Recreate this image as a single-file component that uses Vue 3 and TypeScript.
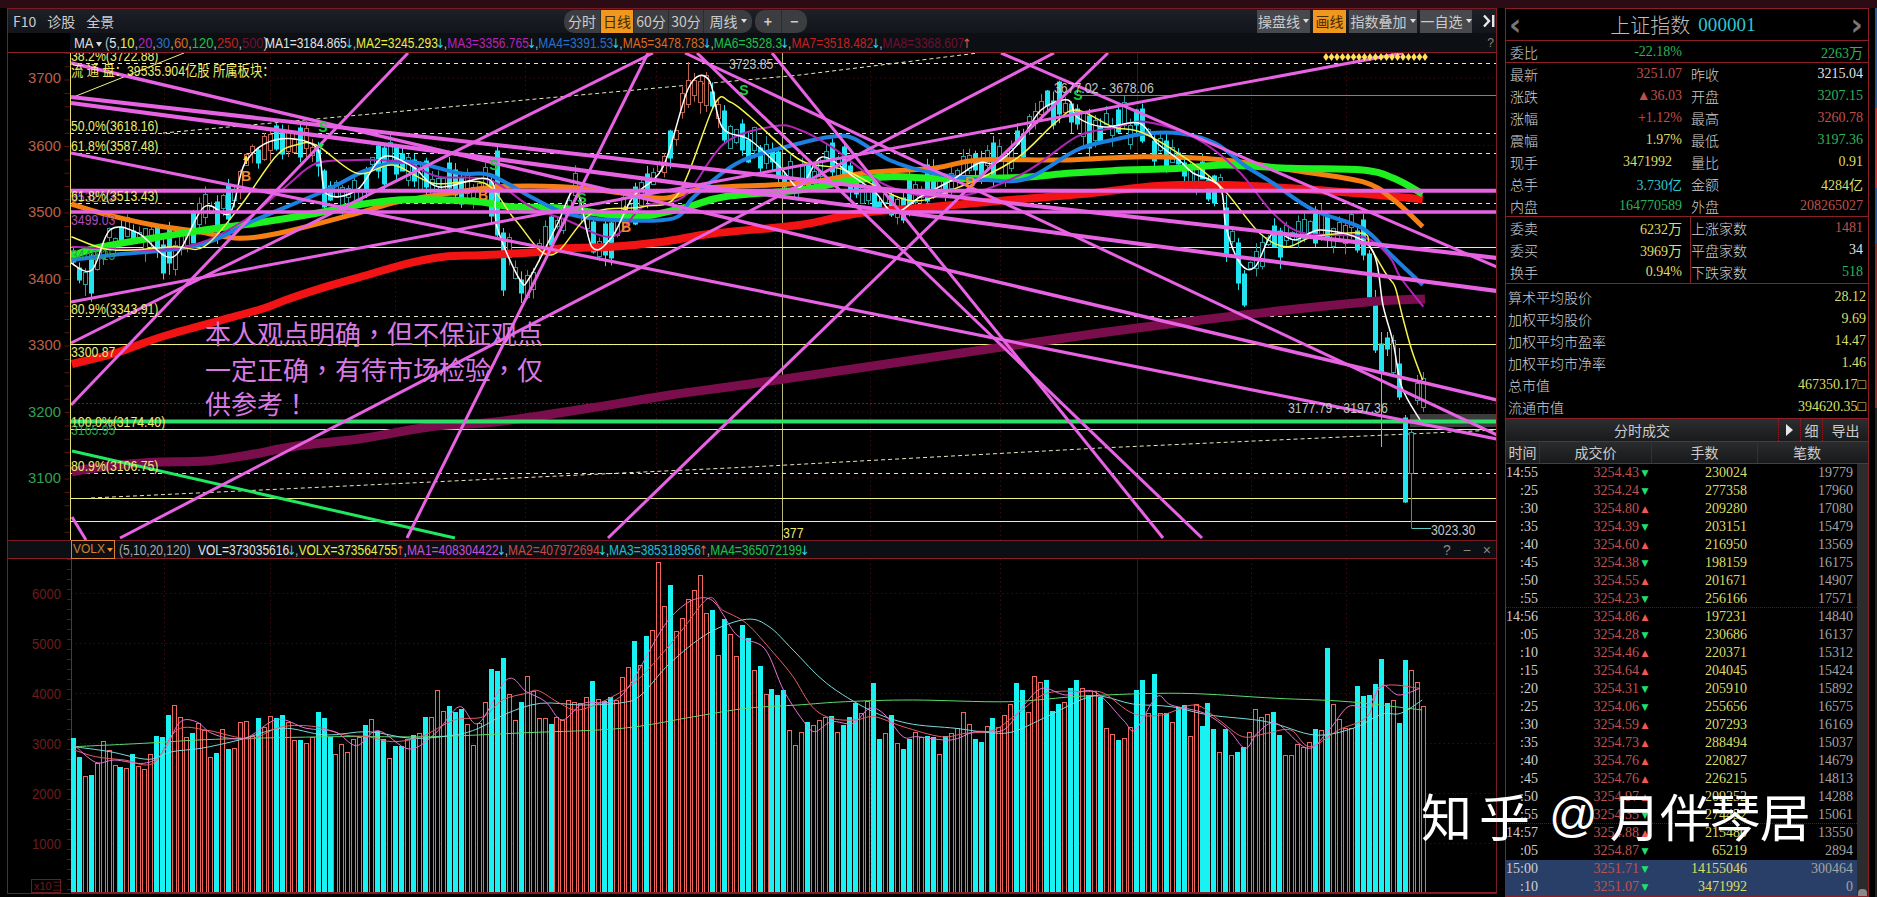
<script setup lang="ts">
type P = [number, number]
const conv = (a: number[], ox: number, sx: number, oy: number): P[] => {
  const r: P[] = []
  for (let i = 0; i < a.length; i += 2) r.push([ox + a[i] / sx, oy + a[i + 1] / 3])
  return r
}
const z1 = (a: number[]) => conv(a, 0, 1.96, 0)
const z2 = (a: number[]) => conv(a, 800, 2.24, 0)
const z7 = (a: number[]) => conv(a, 0, 2.09, 290)
const z10 = (a: number[]) => conv(a, 1100, 3, 200)
const z8 = (a: number[]) => conv(a, 0, 2.09, 560)
const z9 = (a: number[]) => conv(a, 750, 2.09, 560)

const smooth = (p: P[]): string => {
  let d = `M${p[0][0].toFixed(1)} ${p[0][1].toFixed(1)}`
  for (let i = 0; i < p.length - 1; i++) {
    const a = p[Math.max(0, i - 1)], b = p[i], c = p[i + 1], e = p[Math.min(p.length - 1, i + 2)]
    d += `C${(b[0] + (c[0] - a[0]) / 6).toFixed(1)} ${(b[1] + (c[1] - a[1]) / 6).toFixed(1)} ${(c[0] - (e[0] - b[0]) / 6).toFixed(1)} ${(c[1] - (e[1] - b[1]) / 6).toFixed(1)} ${c[0].toFixed(1)} ${c[1].toFixed(1)}`
  }
  return d
}

/* volumes: positive = up (hollow), negative = down (solid) */
const vols = [-3080,-2700,2320,-2340,2570,3020,2840,2540,-2500,2480,-2760,2520,2460,2750,-3120,-3100,-3540,3740,3500,3100,-3180,3380,3240,2700,-2780,3260,-2850,2870,3400,3420,3120,-3480,3300,3520,-3480,-3540,3400,3040,-3040,2980,3100,-3600,-3480,-3100,2760,2950,2800,3060,3100,-3340,3450,-3220,-3060,2680,-2920,-2920,3060,-3130,3170,-3500,3500,4040,3610,-3720,-3600,-3660,3350,2930,3370,3790,-4460,-4420,-4670,3950,3430,-3800,4310,4020,3470,3470,-3350,3490,3430,3830,3790,3770,3900,-4210,3850,-3810,-3890,3830,4290,4490,-5010,4530,-5110,5230,6600,5710,-6130,5210,5470,5850,6030,6330,5570,-5630,4730,-5450,5150,4710,-5330,-5070,4430,-4510,3950,-4050,-3930,-4030,3230,2930,3190,-3390,3330,3430,3500,-3510,3190,-3330,-3490,-3780,3570,3820,-4170,-3050,3170,-3540,2970,-2850,-3050,3200,3100,-3110,-3100,2750,-3110,3170,3270,3590,3350,-3050,-2990,3310,-3470,3300,3530,3750,-4170,-4030,3590,4310,4190,-4230,-3610,-3760,3790,-4070,-4230,4070,-3930,4010,-3890,3270,3150,-3030,3070,3290,-4030,-4230,3570,-4350,3570,-3580,3400,-3700,-3740,3110,3750,-3310,-3770,-3250,2790,-3250,2730,-2790,-2900,3190,3650,3490,3550,-3590,-3130,2730,2730,2950,2890,2990,-3250,3230,-4870,3750,3450,3270,3280,-4110,-3910,-3930,-4150,-4650,-3770,3830,-3370,-4630,4430,4190,3710]
const step = (1423 - 73.2) / (vols.length - 1)
const xOf = (i: number) => 73.2 + i * step
const volBars = vols.map((v, i) => {
  const h = Math.round(Math.abs(v) / 20)
  return { x: Math.round(xOf(i) - 2.5), y: 892 - h, h, up: v > 0 }
})

const path: P[] = [[71,263],[92,270],[110,230],[138,233],[173,257],[204,207],[230,213],[245,163],[275,140],[316,147],[326,193],[357,190],[383,157],[413,167],[439,187],[490,180],[497,227],[520,280],[530,277],[556,227],[576,190],[592,247],[612,237],[633,197],[663,167],[689,87],[709,80],[722,127],[750,140],[780,167],[800,187],[822,157],[854,177],[876,193],[894,213],[920,197],[952,180],[979,163],[996,163],[1019,143],[1041,110],[1068,100],[1077,117],[1104,127],[1139,123],[1157,143],[1179,160],[1193,173],[1220,187],[1226,227],[1240,263],[1255,267],[1273,233],[1295,240],[1322,230],[1353,230],[1367,253],[1376,300],[1425,400]]
const interp = (x: number) => {
  for (let i = 0; i < path.length - 1; i++) {
    if (x <= path[i + 1][0]) {
      const t = (x - path[i][0]) / (path[i + 1][0] - path[i][0])
      return path[i][1] + t * (path[i + 1][1] - path[i][1])
    }
  }
  return path[path.length - 1][1]
}
let seed = 77
const rnd = () => { seed = (seed * 16807) % 2147483647; return seed / 2147483647 }
const overrides: Record<number, [number, number, number, number]> = {
  1227: [207, 255, 195, 262], 1238: [242, 283, 238, 290], 1244: [273, 305, 270, 307],
  1369: [253, 297, 250, 300], 1375: [297, 350, 290, 353], 1382: [343, 373, 332, 447],
  1387: [337, 349, 332, 356], 1393: [340, 372, 335, 375], 1398: [363, 397, 348, 400],
  1404: [417, 502, 415, 503], 1411: [432, 473, 430, 528], 1417: [383, 400, 375, 405], 1423: [378, 407, 372, 412],
  497: [150, 235, 146, 240], 501: [232, 290, 228, 296], 689: [80, 104, 62, 108], 708: [75, 105, 72, 112], 722: [110, 140, 105, 144],
}
const oKeys = Object.keys(overrides).map(Number)
const candles = vols.map((v, i) => {
  const x = Math.round(xOf(i)) + 0.5
  const up = v > 0
  const near = oKeys.find(k => Math.abs(k - x) < 3)
  let top: number, bot: number, hi: number, lo: number
  if (near !== undefined) {
    [top, bot, hi, lo] = overrides[near]
  } else {
    const h = up ? 6 + rnd() * 18 : 12 + rnd() * 26
    const c = interp(x) + (rnd() - 0.5) * 22
    top = c - h / 2; bot = c + h / 2
    hi = top - rnd() * 8; lo = bot + rnd() * 12
  }
  const warm = (x > 238 && x < 330) || (x > 655 && x < 725) || (x > 1032 && x < 1072)
  return { x, up, top: Math.round(top) + 0.5, h: Math.round(bot - top), hi, lo, warm }
})

const ma8 = smooth([...z7([150,545,230,528,320,517,430,513,520,495,620,468,760,445,900,410,1040,395,1230,355,1400,315,1568,282]), [900,362],[1100,333],[1243,315],[1367,302],[1425,299]])
const ma7 = smooth([...z7([150,222,240,190,350,135,540,60]), ...z1([560,900,640,860,720,825,800,790,870,770,950,765,1060,755,1100,745,1200,740,1300,725,1400,700,1568,675]), ...z2([130,640,300,620,470,600,650,580,800,558,950,555,1100,565,1250,580,1395,598])])
const ma6 = smooth([...z1([140,770,200,740,400,690,500,670,620,640,700,615,780,600,870,600,940,605,1000,620,1100,625,1200,645,1260,650,1350,620,1420,590,1568,570]), ...z2([100,545,200,530,300,535,420,535,520,530,600,520,700,512,850,505,950,495,1100,505,1260,510,1330,535,1395,582])])
const ma5 = smooth([...z1([140,612,200,640,300,675,390,695,470,715,560,695,700,640,780,605,880,580,980,560,1100,560,1200,575,1300,595,1380,565,1568,550]), ...z2([150,518,300,505,400,480,600,480,770,470,950,480,1100,510,1260,545,1330,600,1395,680])])
const ma4 = smooth([...z1([140,780,220,765,390,735,500,660,640,570,720,510,800,485,900,520,960,525,1040,590,1110,640,1200,660,1320,655,1360,590,1450,485,1568,430]), ...z2([70,410,120,415,200,480,300,520,420,540,510,535,620,450,700,420,780,400,850,400,930,430,1000,500,1060,550,1150,630,1260,685,1320,760,1395,855])])
const ma3 = smooth([...z1([140,740,300,750,390,730,480,660,560,560,620,490,700,480,740,480,800,490,860,530,960,540,1040,620,1110,660,1200,710,1260,620,1340,590,1420,430,1520,378,1568,390]), ...z2([70,440,200,560,350,590,500,520,620,410,700,385,770,365,880,410,980,510,1060,640,1130,700,1260,710,1320,770]), ...z10([900,230,970,320])])
const ma2 = smooth([...z1([140,710,220,750,340,740,400,740,470,620,540,470,580,435,620,435,700,520,770,495,850,550,950,550,1010,660,1080,765,1160,640,1260,620,1330,580,1400,315,1430,305,1470,350,1568,480]), ...z2([100,510,240,600,340,570,480,480,570,370,620,330,700,380,770,400,880,490,950,570,1030,700,1090,740,1150,710,1260,700]), ...z10([810,140,860,225,885,260,905,340,935,450,968,540])])
const ma1 = smooth([...path.slice(0, 55), ...z10([810,140,850,320,880,430,905,560,960,660])])

const hlines = { dashed: [63, 133, 153, 203, 316, 473], solid: [247, 344, 429, 498, 521] }
const purple: { x1: number; y1: number; x2: number; y2: number; w: number }[] = [
  { x1: 71, y1: 97, x2: 1497, y2: 258, w: 4 },
  { x1: 71, y1: 103, x2: 1497, y2: 291, w: 4 },
  { x1: 1001, y1: 53, x2: 1497, y2: 267, w: 3 },
  { x1: 685, y1: 53, x2: 1497, y2: 435, w: 3 },
  { x1: 71, y1: 63, x2: 1497, y2: 400, w: 3.5 },
  { x1: 71, y1: 153, x2: 1497, y2: 439, w: 3.2 },
  { x1: 71, y1: 302, x2: 1403, y2: 53, w: 3 },
  { x1: 71, y1: 343, x2: 653, y2: 53, w: 3 },
  { x1: 71, y1: 405, x2: 408, y2: 53, w: 3 },
  { x1: 120, y1: 538, x2: 1054, y2: 53, w: 3 },
  { x1: 407, y1: 538, x2: 648, y2: 53, w: 3 },
  { x1: 608, y1: 538, x2: 1108, y2: 53, w: 3 },
  { x1: 772, y1: 53, x2: 1163, y2: 538, w: 3 },
  { x1: 697, y1: 53, x2: 1202, y2: 538, w: 3 },
  { x1: 72, y1: 517, x2: 86, y2: 540, w: 3 },
  { x1: 70, y1: 190.7, x2: 1497, y2: 190.7, w: 4 },
  { x1: 70, y1: 212, x2: 1497, y2: 212, w: 3.5 },
]
const priceAxis = [
  { t: '3700', y: 78, c: 'warm' }, { t: '3600', y: 145.5, c: 'warm' }, { t: '3500', y: 212, c: 'warm' },
  { t: '3400', y: 278.5, c: 'warm' }, { t: '3300', y: 345, c: 'warm' }, { t: '3200', y: 412, c: 'cool' }, { t: '3100', y: 478, c: 'cool' },
]
const chartLabels = [
  { t: '38.2%(3722.88)', x: 71, y: 60, c: 'ly' },
  { t: '流 通 盘：39535.904亿股 所属板块：', x: 71, y: 75, c: 'ly' },
  { t: '50.0%(3618.16)', x: 71, y: 130, c: 'ly' },
  { t: '61.8%(3587.48)', x: 71, y: 150, c: 'ly' },
  { t: '3532.23', x: 71, y: 201, c: 'lp' },
  { t: '61.8%(3513.43)', x: 71, y: 200, c: 'ly' },
  { t: '3499.03', x: 71, y: 224, c: 'lp' },
  { t: '3449.25', x: 71, y: 259, c: 'lg' },
  { t: '80.9%(3343.91)', x: 71, y: 313, c: 'ly' },
  { t: '3300.87', x: 71, y: 356, c: 'ly' },
  { t: '100.0%(3174.40)', x: 71, y: 426, c: 'ly' },
  { t: '3165.95', x: 71, y: 434, c: 'lg' },
  { t: '80.9%(3106.75)', x: 71, y: 470, c: 'ly' },
  { t: '3723.85', x: 729, y: 68, c: 'lw' },
  { t: '3677.02 - 3678.06', x: 1054, y: 92, c: 'lw' },
  { t: '3177.79 - 3197.36', x: 1288, y: 412, c: 'lw' },
  { t: '3023.30', x: 1431, y: 534, c: 'lw' },
  { t: '377', x: 783, y: 537, c: 'ly' },
]
const marks = [
  { t: 'S', x: 323, y: 132, c: 'ms' }, { t: 'S', x: 494, y: 170, c: 'ms' }, { t: 'S', x: 582, y: 203, c: 'ms' },
  { t: 'S', x: 744, y: 95, c: 'ms' }, { t: 'S', x: 1078, y: 100, c: 'ms' },
  { t: 'B', x: 246, y: 181, c: 'mb' }, { t: 'B', x: 483, y: 200, c: 'mb' }, { t: 'B', x: 626, y: 232, c: 'mb' }, { t: 'B', x: 970, y: 187, c: 'mb' },
]
const diamonds = Array.from({ length: 19 }, (_, i) => 1326 + i * 5.5)
const gridX = [164, 270, 395, 525, 656, 775, 870, 1000, 1251, 1346]
const vline1 = smooth([...z8([155,555,200,607,240,600,300,610,340,580,375,488,410,485,440,518,480,535,520,530,580,478,640,505,700,515,745,557,790,512,855,567,910,520,960,440,1000,490,1060,358,1100,395,1140,425,1175,480,1220,430,1300,405,1400,175,1480,115,1540,225]), ...z9([30,265,70,390,110,480,135,515,170,485,215,490,250,445,280,462,320,530,350,530,420,540,470,515,530,510,570,440,610,385,660,405,720,395,780,480,805,510,850,410,880,435,950,460,1000,510,1035,565,1060,520,1100,490,1165,565,1210,510,1250,440,1290,440,1320,375,1355,405,1400,385])])
const vline2 = smooth([...z8([155,570,200,590,260,600,320,610,370,510,430,510,490,530,530,535,590,500,660,500,720,525,770,530,820,545,880,530,950,480,1010,470,1050,420,1100,400,1125,392,1170,430,1210,450,1280,410,1340,350,1420,220,1480,115,1510,150,1560,190]), ...z9([50,280,90,350,130,440,170,475,220,480,260,470,320,500,400,530,450,520,510,510,560,460,620,400,700,395,740,400,800,460,860,465,930,435,980,480,1030,530,1080,520,1130,510,1170,560,1230,510,1290,470,1320,380,1400,385])])
const vline3 = smooth([...z8([155,560,230,575,310,598,360,575,420,565,500,540,590,505,680,525,770,515,860,535,950,525,1000,505,1060,460,1130,430,1220,435,1300,428,1340,405,1400,310,1480,220,1560,178]), ...z9([40,200,90,270,160,370,250,450,330,490,430,505,500,518,550,515,620,470,700,415,740,410,800,432,880,440,960,465,1080,485,1180,525,1260,505,1320,463,1360,460,1405,420])])
const vline4 = smooth([...z8([155,560,300,550,450,538,700,530,900,530,1100,518,1300,505,1450,470,1560,445]), ...z9([100,435,200,425,340,420,540,425,700,408,900,400,1100,415,1250,425,1405,450])])
const volAxis = [6000, 5000, 4000, 3000, 2000, 1000].map(v => ({ t: String(v), y: Math.round(892.7 - v / 20) + 0.5 }))

const maParams = [['5','c-w'],['10','c-y'],['20','c-m'],['30','c-b'],['60','c-o'],['120','c-g'],['250','c-r'],['500','c-d']]
const maVals = [
  { t: 'MA1=3184.865', c: 'c-w', up: false }, { t: 'MA2=3245.293', c: 'c-y', up: false }, { t: 'MA3=3356.765', c: 'c-m', up: false },
  { t: 'MA4=3391.53', c: 'c-b', up: false }, { t: 'MA5=3478.783', c: 'c-o', up: false }, { t: 'MA6=3528.3', c: 'c-g', up: false },
  { t: 'MA7=3518.482', c: 'c-r', up: false }, { t: 'MA8=3368.607', c: 'c-d', up: true },
]
const volVals = [
  { t: 'VOL=373035616', c: 'c-w', up: false }, { t: 'VOLX=373564755', c: 'c-y', up: true }, { t: 'MA1=408304422', c: 'c-m2', up: false },
  { t: 'MA2=407972694', c: 'c-r2', up: false }, { t: 'MA3=385318956', c: 'c-t', up: true }, { t: 'MA4=365072199', c: 'c-g', up: false },
]
const quote = [
  ['最新', '3251.07', 'red', '昨收', '3215.04', 'white'],
  ['涨跌', '▲36.03', 'red', '开盘', '3207.15', 'green'],
  ['涨幅', '+1.12%', 'red', '最高', '3260.78', 'red'],
  ['震幅', '1.97%', 'yellow', '最低', '3197.36', 'green'],
  ['现手', '3471992', 'yellow shift', '量比', '0.91', 'yellow'],
  ['总手', '3.730亿', 'cyan', '金额', '4284亿', 'yellow'],
  ['内盘', '164770589', 'green', '外盘', '208265027', 'red'],
]
const breadth = [
  ['委卖', '6232万', 'yellow', '上涨家数', '1481', 'red'],
  ['委买', '3969万', 'yellow', '平盘家数', '34', 'white'],
  ['换手', '0.94%', 'yellow', '下跌家数', '518', 'green'],
]
const stats = [
  ['算术平均股价', '28.12'], ['加权平均股价', '9.69'], ['加权平均市盈率', '14.47'],
  ['加权平均市净率', '1.46'], ['总市值', '467350.17□'], ['流通市值', '394620.35□'],
]
const trades: { t: string; p: string; d: boolean; h: string; n: string; sep?: boolean; last?: boolean }[] = [
  { t: '14:55', p: '3254.43', d: true, h: '230024', n: '19779' },
  { t: ':25', p: '3254.24', d: true, h: '277358', n: '17960' },
  { t: ':30', p: '3254.80', d: false, h: '209280', n: '17080' },
  { t: ':35', p: '3254.39', d: true, h: '203151', n: '15479' },
  { t: ':40', p: '3254.60', d: false, h: '216950', n: '13569' },
  { t: ':45', p: '3254.38', d: true, h: '198159', n: '16175' },
  { t: ':50', p: '3254.55', d: false, h: '201671', n: '14907' },
  { t: ':55', p: '3254.23', d: true, h: '256166', n: '17571', sep: true },
  { t: '14:56', p: '3254.86', d: false, h: '197231', n: '14840' },
  { t: ':05', p: '3254.28', d: true, h: '230686', n: '16137' },
  { t: ':10', p: '3254.46', d: false, h: '220371', n: '15312' },
  { t: ':15', p: '3254.64', d: false, h: '204045', n: '15424' },
  { t: ':20', p: '3254.31', d: true, h: '205910', n: '15892' },
  { t: ':25', p: '3254.06', d: true, h: '255656', n: '16575' },
  { t: ':30', p: '3254.59', d: false, h: '207293', n: '16169' },
  { t: ':35', p: '3254.73', d: false, h: '288494', n: '15037' },
  { t: ':40', p: '3254.76', d: false, h: '220827', n: '14679' },
  { t: ':45', p: '3254.76', d: false, h: '226215', n: '14813' },
  { t: ':50', p: '3254.97', d: false, h: '209252', n: '14288' },
  { t: ':55', p: '3254.35', d: true, h: '274452', n: '15061', sep: true },
  { t: '14:57', p: '3254.88', d: false, h: '215480', n: '13550' },
  { t: ':05', p: '3254.87', d: true, h: '65219', n: '2894' },
  { t: '15:00', p: '3251.71', d: true, h: '14155046', n: '300464', last: true },
  { t: ':10', p: '3251.07', d: true, h: '3471992', n: '0', last: true },
]
</script>

<template>
  <div class="app">
    <section class="left">
      <header class="toolbar">
        <nav class="tb-left"><span>F10</span><span>诊股</span><span>全景</span></nav>
        <div class="pill periods">
          <button class="w36">分时</button><button class="w33 on">日线</button><button class="w35">60分</button><button class="w35">30分</button><button class="w49">周线 <i class="caret" /></button>
        </div>
        <div class="pill zoomer"><button class="w26">+</button><button class="w26">−</button></div>
        <div class="tb-right">
          <button class="sq w53">操盘线 <i class="caret" /></button>
          <button class="sq w33 on">画线</button>
          <button class="sq w68">指数叠加 <i class="caret" /></button>
          <button class="sq w52">一自选 <i class="caret" /></button>
          <svg class="collapse" width="12" height="14" viewBox="0 0 12 14"><path d="M1 1.5 6 7 1 12.5" fill="none" stroke="#e8e8e8" stroke-width="2.4" /><rect x="9" y="1" width="2.4" height="12" fill="#e8e8e8" /></svg>
        </div>
      </header>
      <div class="mabar">
        <span class="mabar-name tall">MA<i class="caret tiny" /></span>
        <span class="params tall">(<template v-for="(p, i) in maParams" :key="p[0]"><span :class="p[1]">{{ p[0] }}</span><template v-if="i < maParams.length - 1">,</template></template>)</span>
        <span class="vals tall"><span v-for="(m, i) in maVals" :key="m.t"><span :class="m.c">{{ m.t }}</span><b :class="m.up ? 'ar-up' : 'ar-dn'">{{ m.up ? '↑' : '↓' }}</b><template v-if="i < maVals.length - 1">,</template></span></span>
        <span class="help">?</span>
      </div>
      <svg class="main-chart" viewBox="8 53 1488 487" width="1488" height="487">
        <defs><clipPath id="plot"><rect x="70" y="53" width="1430" height="487" /></clipPath></defs>
        <rect x="8" y="53" width="1488" height="487" fill="#000" />
        <g clip-path="url(#plot)">
          <line v-for="x in gridX" :key="'g' + x" :x1="x + 0.5" :x2="x + 0.5" y1="53" y2="540" class="grid" />
          <line v-for="a in priceAxis" :key="'h' + a.t" x1="70" x2="1497" :y1="a.y" :y2="a.y" class="grid" />
          <line x1="70" x2="1497" y1="403.5" y2="403.5" class="reddot" />
          <line x1="1137.5" x2="1137.5" y1="53" y2="540" class="gridstrong" />
          <line x1="782.5" x2="782.5" y1="53" y2="540" class="cross" />
          <line v-for="y in hlines.dashed" :key="'d' + y" x1="70" x2="1497" :y1="y + 0.5" :y2="y + 0.5" class="dash" />
          <line v-for="y in hlines.solid" :key="'s' + y" x1="70" x2="1497" :y1="y + 0.5" :y2="y + 0.5" class="solid" />
          <line x1="71" y1="98" x2="184" y2="53" class="solid" />
          <polyline points="163,133 327,118 800,75 978,53" class="thindash" />
          <polyline points="91,498 750,467 1100,448 1497,430" class="thindash" />
          <line x1="716" x2="729" y1="63.5" y2="63.5" class="note" />
          <line x1="1077" x2="1497" y1="95.5" y2="95.5" class="note" />
          <polyline points="1411.5,528.5 1431,528.5" class="teal" />
          <rect x="1410" y="414" width="87" height="13" fill="#3a3d3a" />
          <g v-for="(c, i) in candles" :key="'c' + i">
            <line :x1="c.x" :x2="c.x" :y1="c.hi" :y2="c.lo" :class="c.up ? (c.warm ? 'w-warm' : 'w-teal') : 'w-cyan'" />
            <rect v-if="c.up" :x="c.x - 2" :y="c.top" width="4" :height="c.h" :class="c.warm ? 'b-warm' : 'b-teal'" />
            <rect v-else :x="c.x - 2.5" :y="c.top" width="5" :height="c.h" class="b-cyan" />
          </g>
          <path :d="ma8" class="m m8" />
          <path :d="ma7" class="m m7" />
          <path :d="ma5" class="m m5" />
          <path :d="ma6" class="m m6" />
          <path :d="ma4" class="m m4" />
          <path :d="ma3" class="m m3" />
          <path :d="ma2" class="m m2" />
          <path :d="ma1" class="m m1" />
          <line x1="70" x2="1497" y1="421.5" y2="421.5" class="greenH" />
          <line x1="72" y1="451" x2="455" y2="538" class="greenD" />
          <line v-for="(l, i) in purple" :key="'p' + i" :x1="l.x1" :y1="l.y1" :x2="l.x2" :y2="l.y2" :stroke-width="l.w" class="pur" />
          <polygon v-for="x in diamonds" :key="'dm' + x" :points="`${x},53 ${x + 2.8},57 ${x},61 ${x - 2.8},57`" fill="#ffe25a" />
          <text v-for="m in marks" :key="m.t + m.x" :x="m.x" :y="m.y" text-anchor="middle" :class="['mark', m.c]">{{ m.t }}</text>
          <polygon points="246,155 243,160 245,160 245,164 247,164 247,160 249,160" fill="#f0e040" />
          <polygon points="625,205 622,210 628,210" fill="#f0e040" />
          <polygon points="321,149 318,144 324,144" fill="#20e060" />
          <text v-for="l in chartLabels" :key="l.t + l.y" :x="l.x" :y="l.y" :class="['lab', l.c]">{{ l.t }}</text>
        </g>
        <line x1="70.5" x2="70.5" y1="53" y2="540" class="axis" />
        <line x1="67" x2="67" y1="53" y2="540" class="ticks" />
        <text v-for="a in priceAxis" :key="a.t" x="61" :y="a.y + 5" text-anchor="end" :class="['ax', a.c]">{{ a.t }}</text>
        <text x="205" y="344" class="say">本人观点明确，但不保证观点</text>
        <text x="205" y="380" class="say">一定正确，有待市场检验，仅</text>
        <text x="205" y="414" class="say">供参考！</text>
      </svg>
      <div class="volbar">
        <span class="volx">VOLX<i class="caret tiny orange" /></span>
        <span class="params dim tall">(5,10,20,120)</span>
        <span class="vals tall"><span v-for="(m, i) in volVals" :key="m.t"><span :class="m.c">{{ m.t }}</span><b :class="m.up ? 'ar-up' : 'ar-dn'">{{ m.up ? '↑' : '↓' }}</b><template v-if="i < volVals.length - 1">,</template></span></span>
        <span class="win">? <em>−</em> ×</span>
      </div>
      <svg class="vol-chart" viewBox="8 559 1488 334" width="1488" height="334">
        <rect x="8" y="559" width="1488" height="334" fill="#000" />
        <line v-for="x in gridX" :key="x" :x1="x + 0.5" :x2="x + 0.5" y1="559" y2="892" class="grid" />
        <line x1="1137.5" x2="1137.5" y1="559" y2="892" class="gridstrong" />
        <line v-for="a in volAxis" :key="a.t" x1="71" x2="1497" :y1="a.y" :y2="a.y" class="grid" />
        <line x1="71.5" x2="71.5" y1="559" y2="892" class="vaxis" />
        <line x1="69" x2="69" y1="559" y2="892" class="vticks" />
        <text v-for="a in volAxis" :key="'t' + a.t" x="61" :y="a.y + 5" text-anchor="end" class="ax vax">{{ a.t }}</text>
        <rect x="31.5" y="879.5" width="29" height="13" class="xbox" />
        <text x="34" y="890" class="ax xtext">x10三</text>
        <template v-for="(b, i) in volBars" :key="i">
          <rect v-if="b.up" :x="b.x + 0.5" :y="b.y + 0.5" width="4" :height="b.h" class="vb-up" />
          <rect v-else :x="b.x" :y="b.y" width="5" :height="b.h" class="vb-dn" />
        </template>
        <path :d="vline4" class="vl v4" />
        <path :d="vline3" class="vl v3" />
        <path :d="vline2" class="vl v2" />
        <path :d="vline1" class="vl v1" />
        <line x1="71" x2="1497" y1="892.5" y2="892.5" class="vaxis" />
      </svg>
    </section>

    <aside class="right">
      <div class="title"><span class="chev">‹</span><span class="title-mid"><span class="t-name">上证指数</span><span class="t-code">000001</span></span><span class="chev">›</span></div>
      <div class="row single"><span class="lb">委比</span><span class="v green w-mid">-22.18%</span><span class="v green">2263万</span></div>
      <div class="block">
        <div v-for="r in quote" :key="r[0]" class="q">
          <div class="cell c1"><span class="lb">{{ r[0] }}</span><span :class="['v', r[2]]">{{ r[1] }}</span></div>
          <div class="cell c2"><span class="lb">{{ r[3] }}</span><span :class="['v', r[5]]">{{ r[4] }}</span></div>
        </div>
      </div>
      <div class="block divided">
        <div v-for="r in breadth" :key="r[0]" class="q">
          <div class="cell c1"><span class="lb">{{ r[0] }}</span><span :class="['v', r[2]]">{{ r[1] }}</span></div>
          <div class="cell c2"><span class="lb">{{ r[3] }}</span><span :class="['v', r[5]]">{{ r[4] }}</span></div>
        </div>
      </div>
      <div class="stats">
        <div v-for="s in stats" :key="s[0]" class="s"><span class="lb">{{ s[0] }}</span><span class="v yellow">{{ s[1] }}</span></div>
      </div>
      <div class="subhead">
        <span class="sh-title">分时成交</span>
        <span class="sh-btn play"><i class="tri" /></span>
        <span class="sh-btn thin">细</span>
        <span class="sh-btn wide">导出</span>
      </div>
      <div class="cols"><span class="k1">时间</span><span class="k2">成交价</span><span class="k3">手数</span><span class="k4">笔数</span></div>
      <div class="list">
        <div class="rows">
          <div v-for="(t, i) in trades" :key="i" :class="['tr', { sep: t.sep, last: t.last }]">
            <span class="tt">{{ t.t }}</span><span class="tp">{{ t.p }}</span><span :class="['ta', t.d ? 'dn' : 'up']">{{ t.d ? '▼' : '▲' }}</span><span class="th">{{ t.h }}</span><span class="tn">{{ t.n }}</span>
          </div>
        </div>
        <div class="scroll"><i /></div>
      </div>
    </aside>
    <div class="edge" />
    <div class="watermark"><span class="wm-a">知乎</span><span class="wm-at">@</span><span class="wm-b">月伴琴居</span></div>
  </div>
</template>

<style>
html, body { margin: 0; background: #000; overflow: hidden; }
</style>

<style scoped>
* { box-sizing: border-box; }
.app { position: relative; width: 1877px; height: 897px; display: flex; background: #000; border-top: 8px solid #2b0b14; font-family: "Liberation Sans", "Noto Sans CJK SC", sans-serif; overflow: hidden; }
.left { margin-left: 7px; width: 1490px; height: 886px; border: 1px solid #7a1a22; display: flex; flex-direction: column; flex: none; }
.toolbar { height: 24px; flex: none; display: flex; align-items: center; background: linear-gradient(#1d2027, #13151b); font-family: "Noto Sans CJK SC", sans-serif; font-size: 14px; color: #ccc; }
.tb-left { width: 556px; display: flex; gap: 11px; padding-left: 5px; flex: none; }
button { border: 0; padding: 0; margin: 0; height: 23px; background: transparent; color: #ccc; font: inherit; font-size: 14px; white-space: nowrap; display: inline-flex; align-items: center; justify-content: center; gap: 3px; }
.pill { display: flex; background: #3b3d40; border-radius: 10px; overflow: hidden; height: 23px; flex: none; }
.zoomer { margin-left: 3px; font-size: 16px; }
.zoomer button { font-weight: 700; }
.pill button + button { border-left: 1px solid #2b2c2f; }
.on { background: #f0981e !important; color: #4a2a00 !important; }
.w26 { width: 26px; } .w33 { width: 33px; } .w35 { width: 35px; } .w36 { width: 36px; } .w49 { width: 49px; } .w52 { width: 52px; } .w53 { width: 53px; } .w68 { width: 68px; }
.tb-right { margin-left: auto; display: flex; align-items: center; gap: 3px; padding-right: 1px; }
.sq { background: #47494c; }
.collapse { margin-left: 8px; }
.caret { display: inline-block; width: 0; height: 0; border-left: 3.5px solid transparent; border-right: 3.5px solid transparent; border-top: 4px solid #ddd; }
.caret.tiny { margin-left: 2px; vertical-align: middle; border-left-width: 3px; border-right-width: 3px; }
.caret.orange { border-top-color: #e89030; }
.tall { display: inline-block; transform: scaleY(1.18); }
.mabar { height: 20px; flex: none; display: flex; align-items: center; background: linear-gradient(90deg, #000 0 62px, #0c0f14 62px); border-bottom: 1px solid #8c1f25; font-family: "Liberation Sans", sans-serif; font-size: 12px; color: #bbb; white-space: nowrap; }
.mabar-name { margin-left: 66px; width: 31px; color: #ddd; font-size: 13px; }
.params { width: 160px; color: #bbb; font-size: 12.9px; }
.vals b { font-weight: 400; font-family: "DejaVu Sans", sans-serif; font-size: 11px; display: inline-block; width: 7px; margin-left: -1px; text-indent: -1px; }
.ar-dn { color: #2fd8e8; } .ar-up { color: #f06040; }
.help { margin-left: auto; margin-right: 2px; color: #888; }
.c-w { color: #e4e4e4; } .c-y { color: #ecec3e; } .c-m { color: #b822b8; } .c-b { color: #2a70c8; } .c-o { color: #d86c20; } .c-g { color: #20c048; } .c-r { color: #c42020; } .c-d { color: #6e1030; } .c-m2 { color: #c84cd8; } .c-r2 { color: #c84848; } .c-t { color: #20bcd0; }
.main-chart, .vol-chart { display: block; flex: none; }
.volbar { height: 19px; flex: none; display: flex; align-items: center; background: #0c1014; border-top: 1px solid #7a1a22; border-bottom: 1px solid #8c1f25; font-family: "Liberation Sans", sans-serif; font-size: 12px; color: #bbb; white-space: nowrap; }
.volx { margin-left: 63px; width: 44px; height: 19px; line-height: 17px; text-align: center; border: 1px solid #e08030; color: #d08030; flex: none; font-size: 12px; }
.params.dim { margin-left: 4px; width: 79px; flex: none; color: #aaa; font-size: 12px; }
.win { margin-left: auto; margin-right: 5px; color: #888; font-size: 14px; word-spacing: 8px; }
.win em { font-style: normal; }
.grid { stroke: #3d0b0e; stroke-dasharray: 1.5 3; stroke-width: 1; }
.gridstrong { stroke: #4c1012; stroke-width: 1; }
.reddot { stroke: #70201c; stroke-dasharray: 2 2; }
.cross { stroke: #e8e89a; stroke-width: 1; opacity: .8; }
.dash { stroke: #e8e8c0; stroke-dasharray: 4 4; stroke-width: 1; }
.solid { stroke: #f2f288; stroke-width: 1; }
.thindash { fill: none; stroke: #e8e8c0; stroke-width: 1; stroke-dasharray: 4 3; }
.note { stroke: #808080; stroke-width: 1; }
.teal { fill: none; stroke: #5fc8c0; }
.w-warm { stroke: #b86450; } .w-teal { stroke: #2f9a9c; } .w-cyan { stroke: #22e4f0; }
.b-warm { fill: #000; stroke: #b86450; stroke-width: 1; } .b-teal { fill: #000; stroke: #2f9a9c; stroke-width: 1; } .b-cyan { fill: #22e4f0; }
.m { fill: none; stroke-linecap: butt; stroke-linejoin: round; }
.m8 { stroke: #7a0e4c; stroke-width: 9; } .m7 { stroke: #f21414; stroke-width: 8; } .m6 { stroke: #1ff01f; stroke-width: 7; } .m5 { stroke: #f57f13; stroke-width: 5; } .m4 { stroke: #1c80e0; stroke-width: 4; } .m3 { stroke: #b025b4; stroke-width: 2; } .m2 { stroke: #f4f44c; stroke-width: 1.5; } .m1 { stroke: #fff; stroke-width: 1.5; }
.greenH { stroke: #2fe068; stroke-width: 4; }
.greenD { stroke: #20e860; stroke-width: 3; }
.pur { stroke: #e763e4; stroke-linecap: butt; }
.mark { font: 700 14px "Liberation Sans", sans-serif; }
.ms { fill: #20c840; } .mb { fill: #f08a2c; }
.lab { font-family: "Liberation Sans", "Noto Sans CJK SC", sans-serif; font-size: 12.3px; transform-box: fill-box; transform-origin: 50% 50%; transform: scaleY(1.18); }
.ly { fill: #ecec70; } .lp { fill: #b04ab8; } .lg { fill: #2fa050; } .lw { fill: #c4c4c4; }
.ax { font-family: "Liberation Sans", sans-serif; font-size: 14.8px; }
.warm { fill: #b8604c; } .cool { fill: #32a055; }
.vax { fill: #6e1c1c; font-size: 13px; transform-box: fill-box; transform-origin: 50% 50%; transform: scaleY(1.15); } .xtext { fill: #6e1c1c; font-size: 11px; }
.xbox { fill: none; stroke: #6e1c1c; }
.axis { stroke: #e8dc70; stroke-width: 1; }
.ticks { stroke: #5c1414; stroke-width: 5; stroke-dasharray: 1 12.3; }
.vaxis { stroke: #8c1f25; stroke-width: 1; fill: none; }
.vticks { stroke: #5c1414; stroke-width: 4; stroke-dasharray: 1 9; }
.say { font-family: "Noto Sans CJK TC", "Noto Sans CJK SC", sans-serif; font-size: 26px; fill: #d87ae2; }
.vb-up { fill: #000; stroke: #f0665c; stroke-width: 1; shape-rendering: crispEdges; }
.vb-dn { fill: #19f2f2; shape-rendering: crispEdges; }
.vl { fill: none; stroke-width: 1; }
.v1 { stroke: #e872d4; } .v2 { stroke: #e85e68; } .v3 { stroke: #78dcdc; } .v4 { stroke: #5adc70; }

.right { margin-left: 8px; width: 364px; height: 889px; border: 1px solid #8c1f25; flex: none; display: flex; flex-direction: column; background: #000; font-family: "Liberation Serif", "Noto Sans CJK SC", serif; }
.title { height: 32px; flex: none; border-bottom: 1px solid #8c1f25; display: flex; align-items: center; justify-content: space-between; padding: 0 5px 0 3px; }
.chev { font: 700 30px "DejaVu Sans", sans-serif; color: #777; line-height: 26px; }
.title-mid { display: flex; align-items: center; gap: 8px; margin-right: 6px; }
.t-name { font: 300 20px "Noto Sans CJK SC", sans-serif; color: #bdbdbd; }
.t-code { font-size: 19px; color: #2cc6d6; letter-spacing: .1px; }
.row.single { height: 22px; flex: none; border-bottom: 1px solid #8c1f25; display: grid; grid-template-columns: 4px 28px 144px 1fr; align-items: center; padding-right: 5px; }
.row.single .lb { grid-column: 2; }
.row.single .w-mid { text-align: right; }
.row.single .v:last-child { text-align: right; }
.lb { font: 300 14px "Noto Sans CJK SC", sans-serif; color: #d0d0d0; white-space: nowrap; }
.v { font-size: 14px; white-space: nowrap; }
.red { color: #c0504e; } .green { color: #2cb45c; } .yellow { color: #dcdc68; } .white { color: #e2e2e2; } .cyan { color: #2cc6d0; }
.shift { margin-right: 10px; }
.block { flex: none; height: 154px; border-bottom: 1px solid #8c1f25; }
.q { display: grid; grid-template-columns: 185px 1fr; height: 22px; }
.cell { display: flex; align-items: center; justify-content: space-between; }
.c1 { padding: 0 9px 0 4px; }
.c2 { padding-right: 5px; }
.block.divided { height: 67px; }
.divided .c1 { border-right: 1px solid #8c1f25; padding-right: 8px; }
.stats { height: 135px; flex: none; padding: 2px 2px 0 2px; border-bottom: 1px solid #8c1f25; }
.s { height: 22px; display: flex; align-items: center; justify-content: space-between; }
.subhead { height: 23px; flex: none; display: flex; background: linear-gradient(#2c2d2e, #191a1b); border-bottom: 1px solid #8c1f25; font: 14px "Noto Sans CJK SC", sans-serif; color: #ccc; line-height: 22px; }
.sh-title { width: 272px; text-align: center; }
.sh-btn { text-align: center; border-left: 1px dotted #8c1f25; display: flex; align-items: center; justify-content: center; }
.play { width: 22px; } .thin { width: 22px; } .wide { flex: 1; }
.tri { width: 0; height: 0; border-top: 6px solid transparent; border-bottom: 6px solid transparent; border-left: 7px solid #e8e8e8; }
.cols { height: 22px; flex: none; display: flex; background: linear-gradient(#2a2b2c, #18191a); border-bottom: 1px solid #8c1f25; font: 14px "Noto Sans CJK SC", sans-serif; color: #ccc; line-height: 21px; text-align: center; }
.cols span + span { border-left: 1px solid #6a1a1e; }
.k1 { width: 33px; } .k2 { width: 112px; } .k3 { width: 106px; } .k4 { flex: 1; padding-right: 12px; }
.list { flex: 1; display: flex; min-height: 0; }
.rows { width: 351px; flex: none; }
.tr { height: 18px; display: grid; grid-template-columns: 32px 101px 12px 96px 106px; align-items: center; font-size: 14px; line-height: 18px; text-align: right; }
.tr.sep { border-bottom: 1px dotted #5a1a1e; }
.tr.last { background: #293f68; }
.tt { color: #cfcfcf; } .tp { color: #c25250; } .th { color: #dcdc68; } .tn { color: #a4a4a4; }
.ta { font: 9px "DejaVu Sans", sans-serif; text-align: center; }
.ta.up { color: #f05858; } .ta.dn { color: #20e070; }
.scroll { flex: 1; background: #2c2c2c; position: relative; }
.scroll i { position: absolute; left: 1px; right: 1px; bottom: 0; height: 7px; border-radius: 4px 4px 0 0; background: #8a8a8a; }
.edge { margin-left: auto; width: 2px; height: 889px; background: linear-gradient(#2b5a9a 0 100px, #d03030 100px 180px, #2b5a9a 180px 235px, #8a3030 235px 400px, #222 400px); }
.watermark { position: absolute; left: 1421px; top: 773px; font: 400 51px/68px "Noto Sans CJK SC", sans-serif; color: #fff; white-space: nowrap; display: flex; }
.wm-a { letter-spacing: 7px; margin-right: 12px; }
.wm-at { font-family: "Liberation Sans", sans-serif; margin-right: 12px; font-size: 48px; }
.wm-b { letter-spacing: -1px; }
</style>
